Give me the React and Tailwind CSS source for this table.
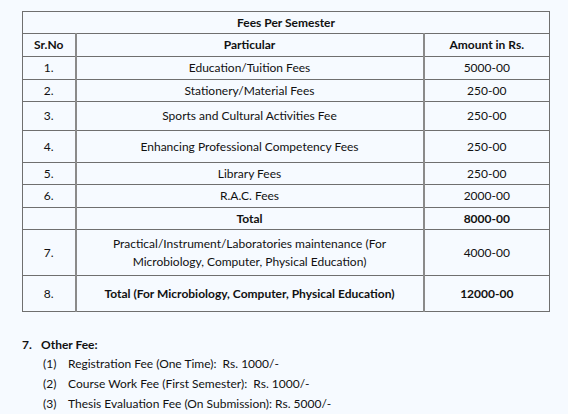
import React from "react";

const rows = [
  { no: "1.", name: "Education/Tuition Fees", amt: "5000-00", h: "h-[23px]" },
  { no: "2.", name: "Stationery/Material Fees", amt: "250-00", h: "h-[22px]" },
  { no: "3.", name: "Sports and Cultural Activities Fee", amt: "250-00", h: "h-[29px]" },
  { no: "4.", name: "Enhancing Professional Competency Fees", amt: "250-00", h: "h-[32px]" },
  { no: "5.", name: "Library Fees", amt: "250-00", h: "h-[22px]" },
  { no: "6.", name: "R.A.C. Fees", amt: "2000-00", h: "h-[23px]" },
];

const others = [
  ["(1)", "Registration Fee (One Time):  Rs. 1000/-"],
  ["(2)", "Course Work Fee (First Semester):  Rs. 1000/-"],
  ["(3)", "Thesis Evaluation Fee (On Submission): Rs. 5000/-"],
];

const cell = "border border-[#6f6f6f] text-center align-middle p-0";

export default function App() {
  return (
    <div className="min-h-[414px] w-[568px] bg-[#f6faff] text-[#111] text-[12px] pt-[11px] pl-[22px] font-['Lato','Open_Sans',sans-serif]">
      <table className="w-[528px] border-collapse border border-[#444] table-fixed">
        <colgroup>
          <col className="w-[53px]" />
          <col className="w-[348px]" />
          <col />
        </colgroup>
        <tbody>
          <tr className="h-[22px]">
            <td colSpan={3} className={`${cell} font-bold`}>Fees Per Semester</td>
          </tr>
          <tr className="h-[23px] font-bold">
            <td className={`${cell} border-r-2 border-r-[#8a8a8a]`}>Sr.No</td>
            <td className={`${cell} border-r-2 border-r-[#8a8a8a]`}>Particular</td>
            <td className={cell}>Amount in Rs.</td>
          </tr>
          {rows.map((r) => (
            <tr key={r.no} className={r.h}>
              <td className={`${cell} border-r-2 border-r-[#8a8a8a]`}>{r.no}</td>
              <td className={`${cell} border-r-2 border-r-[#8a8a8a]`}>{r.name}</td>
              <td className={cell}>{r.amt}</td>
            </tr>
          ))}
          <tr className="h-[22px] font-bold">
            <td className={`${cell} border-r-2 border-r-[#8a8a8a]`}></td>
            <td className={`${cell} border-r-2 border-r-[#8a8a8a]`}>Total</td>
            <td className={cell}>8000-00</td>
          </tr>
          <tr className="h-[46px]">
            <td className={`${cell} border-r-2 border-r-[#8a8a8a]`}>7.</td>
            <td className={`${cell} border-r-2 border-r-[#8a8a8a] leading-[18px]`}>
              Practical/Instrument/Laboratories maintenance (For
              <br />
              Microbiology, Computer, Physical Education)
            </td>
            <td className={cell}>4000-00</td>
          </tr>
          <tr className="h-[36px] font-bold">
            <td className={`${cell} border-r-2 border-r-[#8a8a8a] font-normal`}>8.</td>
            <td className={`${cell} border-r-2 border-r-[#8a8a8a]`}>
              Total (For Microbiology, Computer, Physical Education)
            </td>
            <td className={cell}>12000-00</td>
          </tr>
        </tbody>
      </table>

      <div className="mt-[24px] flex font-bold">
        <span className="w-[19px]">7.</span>
        <span>Other Fee:</span>
      </div>
      <ul className="mt-[2px] pl-[21px] flex flex-col gap-[4px]">
        {others.map(([n, t]) => (
          <li key={n} className="flex h-[16px] items-center">
            <span className="w-[25px]">{n}</span>
            <span className="whitespace-pre">{t}</span>
          </li>
        ))}
      </ul>
    </div>
  );
}
